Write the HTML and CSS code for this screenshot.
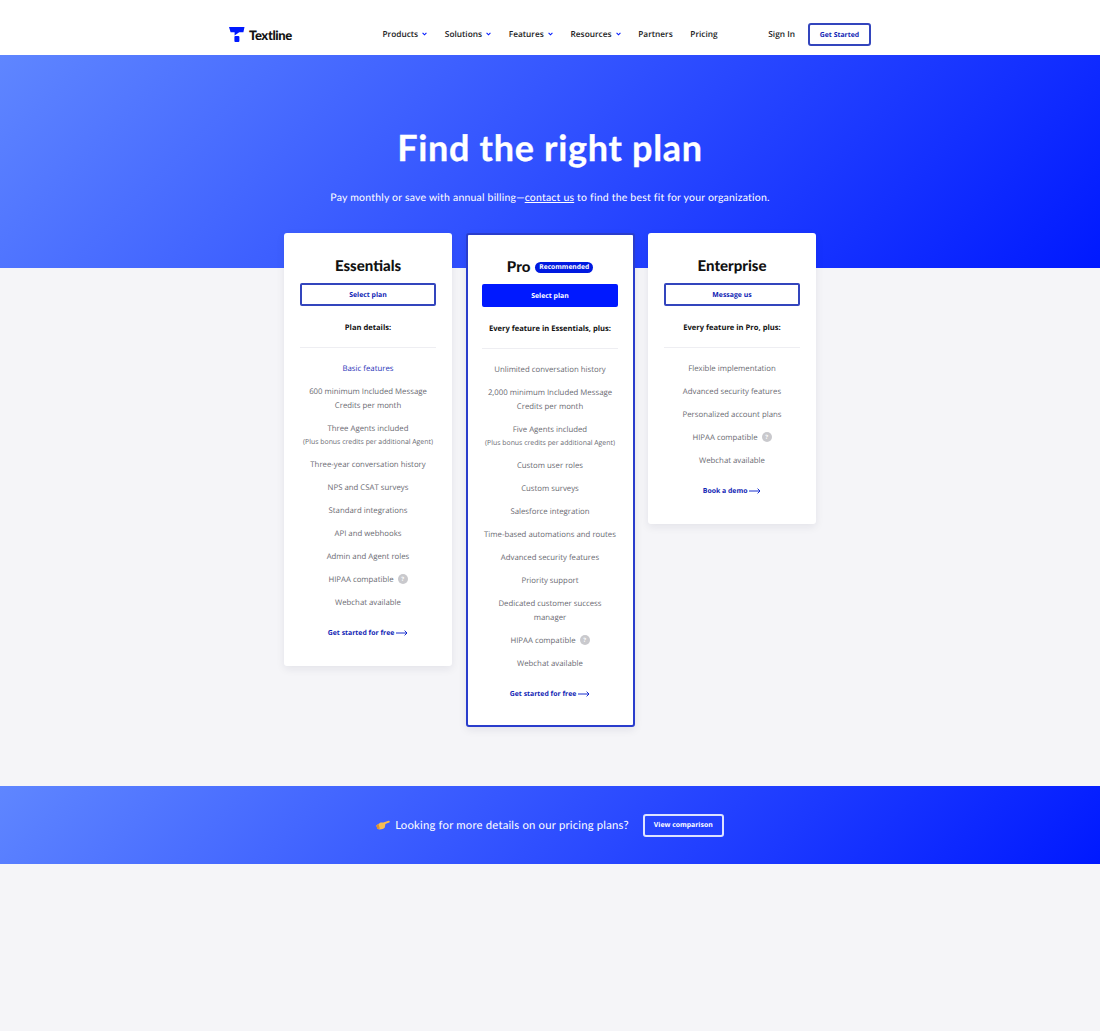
FILE: index.html
```html
<!DOCTYPE html>
<html lang="en">
<head>
  <meta charset="UTF-8" />
  <meta name="viewport" content="width=device-width, initial-scale=1.0"/>
  <title>Pricing - Textline</title>
  <link rel="stylesheet" href="styles.css">
</head>
<body>
  <header class="site-header">
    <div class="nav-wrap">
      <a class="logo" href="#">
        <svg class="logo-mark" width="16" height="15" viewBox="0 0 16 15">
          <path d="M0 0H15.5L14.4 5.2H10.2L5.6 8.4V5.2H1.6Z" fill="#0019ff"/>
          <rect x="5.4" y="9" width="5" height="6" rx="1" fill="#0019ff"/>
        </svg>
        <span class="logo-text">Textline</span>
      </a>
      <nav class="main-nav">
        <a href="#">Products <svg class="caret" width="5" height="4" viewBox="0 0 6 4"><path d="M.7.7 3 3 5.3.7" fill="none" stroke="#0019ff" stroke-width="1.3"/></svg></a>
        <a href="#">Solutions <svg class="caret" width="5" height="4" viewBox="0 0 6 4"><path d="M.7.7 3 3 5.3.7" fill="none" stroke="#0019ff" stroke-width="1.3"/></svg></a>
        <a href="#">Features <svg class="caret" width="5" height="4" viewBox="0 0 6 4"><path d="M.7.7 3 3 5.3.7" fill="none" stroke="#0019ff" stroke-width="1.3"/></svg></a>
        <a href="#">Resources <svg class="caret" width="5" height="4" viewBox="0 0 6 4"><path d="M.7.7 3 3 5.3.7" fill="none" stroke="#0019ff" stroke-width="1.3"/></svg></a>
        <a href="#">Partners</a>
        <a href="#">Pricing</a>
      </nav>
      <div class="nav-actions">
        <a class="sign-in" href="#">Sign In</a>
        <a class="btn-started" href="#">Get Started</a>
      </div>
    </div>
  </header>

  <section class="hero">
    <h1>Find the right plan</h1>
    <p>Pay monthly or save with annual billing—<a href="#">contact us</a> to find the best fit for your organization.</p>
  </section>

  <main class="plans">
    <article class="plan">
      <h2>Essentials</h2>
      <a class="btn-plan" href="#">Select plan</a>
      <h3>Plan details:</h3>
      <ul>
        <li class="highlight">Basic features</li>
        <li>600 minimum Included Message Credits per month</li>
        <li>Three Agents included<small>(Plus bonus credits per additional Agent)</small></li>
        <li>Three-year conversation history</li>
        <li>NPS and CSAT surveys</li>
        <li>Standard integrations</li>
        <li>API and webhooks</li>
        <li>Admin and Agent roles</li>
        <li>HIPAA compatible <span class="help">?</span></li>
        <li>Webchat available</li>
      </ul>
      <a class="plan-link" href="#">Get started for free <svg width="12" height="6" viewBox="0 0 12 6"><path d="M0 3H11M8.6.6 11 3 8.6 5.4" fill="none" stroke="#0019c8" stroke-width=".9"/></svg></a>
    </article>

    <article class="plan plan-pro">
      <h2>Pro <span class="badge">Recommended</span></h2>
      <a class="btn-plan btn-solid" href="#">Select plan</a>
      <h3>Every feature in Essentials, plus:</h3>
      <ul>
        <li>Unlimited conversation history</li>
        <li>2,000 minimum Included Message Credits per month</li>
        <li>Five Agents included<small>(Plus bonus credits per additional Agent)</small></li>
        <li>Custom user roles</li>
        <li>Custom surveys</li>
        <li>Salesforce integration</li>
        <li>Time-based automations and routes</li>
        <li>Advanced security features</li>
        <li>Priority support</li>
        <li>Dedicated customer success manager</li>
        <li>HIPAA compatible <span class="help">?</span></li>
        <li>Webchat available</li>
      </ul>
      <a class="plan-link" href="#">Get started for free <svg width="12" height="6" viewBox="0 0 12 6"><path d="M0 3H11M8.6.6 11 3 8.6 5.4" fill="none" stroke="#0019c8" stroke-width=".9"/></svg></a>
    </article>

    <article class="plan">
      <h2>Enterprise</h2>
      <a class="btn-plan" href="#">Message us</a>
      <h3>Every feature in Pro, plus:</h3>
      <ul>
        <li>Flexible implementation</li>
        <li>Advanced security features</li>
        <li>Personalized account plans</li>
        <li>HIPAA compatible <span class="help">?</span></li>
        <li>Webchat available</li>
      </ul>
      <a class="plan-link" href="#">Book a demo <svg width="12" height="6" viewBox="0 0 12 6"><path d="M0 3H11M8.6.6 11 3 8.6 5.4" fill="none" stroke="#0019c8" stroke-width=".9"/></svg></a>
    </article>
  </main>

  <section class="compare">
    <svg class="hand" width="14" height="10" viewBox="0 0 14 10">
      <path d="M.2 5.6 4.6 2.6 7.4 2.6 12.6 .8C13.8 .6 14.2 2 13.2 2.4L9.4 4 8.8 7.4C7 9.4 3.4 9.8 1.6 9Z" fill="#f6bd52"/>
      <path d="M.2 5.6 2.6 4 3.8 8.8 1.6 9Z" fill="#dc8e30"/>
    </svg>
    <p>Looking for more details on our pricing plans?</p>
    <a class="btn-compare" href="#">View comparison</a>
  </section>
</body>
</html>
```

FILE: styles.css
```css
* {
  box-sizing: border-box;
}

body {
  margin: 0;
  min-height: 100vh;
  background-color: #f5f5f8;
  font-family: 'Open Sans', sans-serif;
  color: #111;
  text-rendering: geometricPrecision;
}

a {
  text-decoration: none;
  color: inherit;
}

.site-header {
  height: 55px;
  background-color: #fff;
}

.nav-wrap {
  width: 642px;
  height: 100%;
  margin: 0 auto;
  padding-top: 14px;
  display: flex;
  align-items: center;
  justify-content: space-between;
}

.logo {
  display: flex;
  align-items: center;
  gap: 4px;
}

.logo-text {
  font-family: 'Lato', sans-serif;
  font-weight: 900;
  font-size: 13px;
  letter-spacing: -0.4px;
}

.main-nav {
  display: flex;
  gap: 17.6px;
  margin-left: 40px;
}

.main-nav a,
.sign-in {
  font-size: 8.3px;
  font-weight: 600;
  color: #1c1c24;
}

.caret {
  margin-left: 2px;
  vertical-align: 1px;
}

.nav-actions {
  display: flex;
  align-items: center;
  gap: 13px;
}

.btn-started {
  width: 63px;
  height: 23px;
  padding-top: 1px;
  display: flex;
  align-items: center;
  justify-content: center;
  border: 2px solid #3345bd;
  border-radius: 3px;
  font-size: 6.9px;
  font-weight: 700;
  color: #0f23b4;
}

.hero {
  height: 213px;
  padding-top: 71px;
  text-align: center;
  color: #fff;
  background: linear-gradient(135deg, #5f86ff 0%, #0019ff 100%);
}

.hero h1 {
  margin: 0;
  font-family: 'Lato', sans-serif;
  font-size: 36px;
  line-height: 42px;
  font-weight: 700;
  letter-spacing: 0.7px;
  -webkit-text-stroke: 0.3px #fff;
}

.hero p {
  margin: 22px 0 0;
  font-family: 'Lato', sans-serif;
  font-size: 10.5px;
  line-height: 16px;
  letter-spacing: 0.2px;
}

.hero p a {
  text-decoration: underline;
}

.plans {
  display: flex;
  justify-content: center;
  align-items: flex-start;
  gap: 14px;
  margin-top: -35px;
}

.plan {
  width: 168px;
  padding: 23px 16px 26px;
  background-color: #fff;
  border-radius: 3px;
  box-shadow: 0 3px 8px rgba(20, 20, 60, 0.08);
  text-align: center;
}

.plan-pro {
  width: 169px;
  margin: 0 -0.5px;
  padding: 22px 14.5px 24px;
  border: 2px solid #2a3dcc;
}

.plan h2 {
  margin: 0;
  font-family: 'Lato', sans-serif;
  font-size: 15px;
  line-height: 20px;
  font-weight: 900;
  display: flex;
  justify-content: center;
  align-items: center;
  gap: 5px;
}

.badge {
  padding: 0 4px;
  height: 11px;
  display: inline-flex;
  align-items: center;
  border-radius: 6px;
  background-color: #0019e0;
  color: #fff;
  font-family: 'Open Sans', sans-serif;
  font-size: 6.7px;
  font-weight: 700;
}

.btn-plan {
  height: 23px;
  margin-top: 7px;
  padding-top: 1px;
  display: flex;
  align-items: center;
  justify-content: center;
  border: 2px solid #3345bd;
  border-radius: 2px;
  font-size: 6.9px;
  font-weight: 700;
  color: #0f23b4;
}

.btn-solid {
  background-color: #0019ff;
  border-color: #0019ff;
  color: #fff;
}

.plan h3 {
  margin: 15px 0 0;
  padding-bottom: 12px;
  border-bottom: 1px solid #eeeef2;
  font-size: 7.6px;
  line-height: 14px;
  font-weight: 700;
}

.plan ul {
  list-style: none;
  margin: 14px 0 0;
  padding: 0;
}

.plan li {
  margin-bottom: 9px;
  font-size: 7.8px;
  line-height: 14px;
  color: #6a6a72;
}

.plan li.highlight {
  color: #1f32b8;
}

.plan li small {
  display: block;
  font-size: 6.9px;
  line-height: 13px;
}

.help {
  display: inline-block;
  width: 10px;
  height: 10px;
  margin-left: 2px;
  margin-top: 1px;
  border-radius: 50%;
  background-color: #c9c9cd;
  color: #fff;
  font-size: 6px;
  line-height: 10px;
  font-weight: 700;
  vertical-align: top;
}

.plan-link {
  display: block;
  margin-top: 18px;
  font-size: 6.9px;
  line-height: 12px;
  font-weight: 700;
  color: #0f23b4;
}

.plan-link svg {
  vertical-align: -0.5px;
}

.compare {
  height: 78px;
  margin-top: 59px;
  display: flex;
  align-items: center;
  justify-content: center;
  color: #fff;
  background: linear-gradient(135deg, #5f86ff 0%, #0019ff 100%);
}

.hand {
  margin-right: 5px;
}

.compare p {
  margin: 0 14px 0 0;
  font-family: 'Lato', sans-serif;
  font-size: 11.3px;
  letter-spacing: 0.2px;
}

.btn-compare {
  width: 81px;
  height: 23px;
  padding-top: 1px;
  display: flex;
  align-items: center;
  justify-content: center;
  border: 2px solid rgba(255, 255, 255, 0.85);
  border-radius: 3px;
  font-size: 6.9px;
  font-weight: 700;
}
```
